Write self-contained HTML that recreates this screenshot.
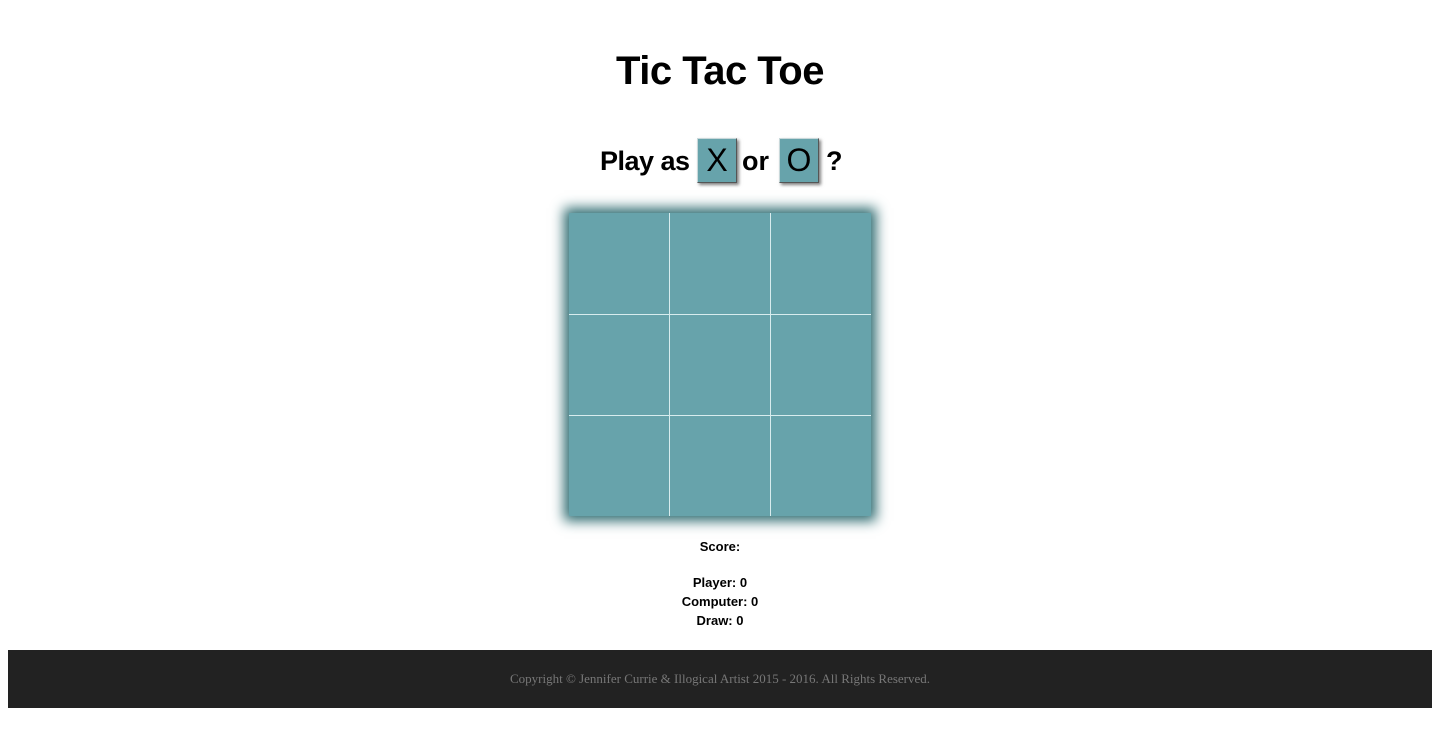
<!DOCTYPE html>
<html><head><meta charset="utf-8"><style>
body{margin:0;background:#fff;font-family:"Liberation Sans",sans-serif;width:1440px;height:731px;position:relative;overflow:hidden}
.t{position:absolute;left:0;width:1440px;text-align:center;font-weight:bold;color:#000}
.btn{position:absolute;top:138px;width:38px;height:43px;background:#67a3ab;border:1px solid #9fb;border-color:#c8d8da #555 #555 #c8d8da;box-shadow:2px 2px 3px rgba(0,0,0,.5);font-size:32px;font-weight:normal;line-height:43px;text-align:center;color:#000}
.board{position:absolute;left:569px;top:213px;width:302px;height:303px;background:#67a3ab;box-shadow:0 0 12px 5px #2e6b70}
.v,.h{position:absolute;background:#d8ecee}
.v{top:0;width:1px;height:303px}.h{left:0;height:1px;width:302px}
.foot{position:absolute;left:8px;top:650px;width:1424px;height:58px;background:#222;color:#777;font-family:"Liberation Serif",serif;font-size:13px;text-align:center;line-height:58px}
</style></head><body>
<div class="t" style="top:49px;font-size:40px;letter-spacing:-0.5px">Tic Tac Toe</div>
<div class="t" style="top:146px;font-size:27px;"><span style="position:absolute;left:600px;letter-spacing:-0.5px">Play as</span><span style="position:absolute;left:742px">or</span><span style="position:absolute;left:826px">?</span></div>
<div class="btn" style="left:697px">X</div>
<div class="btn" style="left:779px">O</div>
<div class="board">
<div class="v" style="left:100px"></div><div class="v" style="left:201px"></div>
<div class="h" style="top:101px"></div><div class="h" style="top:202px"></div>
</div>
<div class="t" style="top:539px;font-size:13px">Score:</div>
<div class="t" style="top:573px;font-size:13px;line-height:19px">Player: 0<br>Computer: 0<br>Draw: 0</div>
<div class="foot">Copyright © Jennifer Currie &amp; Illogical Artist 2015 - 2016. All Rights Reserved.</div>
</body></html>
